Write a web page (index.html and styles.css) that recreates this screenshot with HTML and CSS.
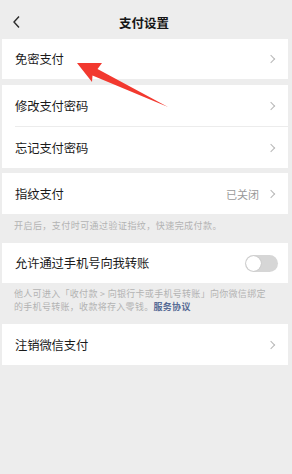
FILE: index.html
```html
<!DOCTYPE html>
<html lang="zh">
<head>
<meta charset="utf-8">
<link rel="stylesheet" href="styles.css">
</head>
<body>
<div class="page">
  <div class="nav">
    <svg class="back" width="10" height="14" viewBox="0 0 10 14"><path d="M7 1.5 L2 7 L7 12.5" fill="none" stroke="#2b2b2b" stroke-width="1.4"/></svg>
    <div class="title">支付设置</div>
  </div>

  <div class="card first">
    <div class="row"><span class="label">免密支付</span><span class="chev"></span></div>
  </div>

  <div class="card gap6">
    <div class="row"><span class="label">修改支付密码</span><span class="chev"></span></div>
    <div class="divider"></div>
    <div class="row"><span class="label">忘记支付密码</span><span class="chev"></span></div>
  </div>

  <div class="card gap5">
    <div class="row"><span class="label">指纹支付</span><span class="right"><span class="value">已关闭</span><span class="chev"></span></span></div>
  </div>
  <div class="desc d1">开启后，支付时可通过验证指纹，快速完成付款。</div>

  <div class="card">
    <div class="row r40"><span class="label">允许通过手机号向我转账</span><span class="toggle"><span class="knob"></span></span></div>
  </div>
  <div class="desc d2"><div>他人可进入「收付款 &gt; 向银行卡或手机号转账」向你微信绑定</div><div>的手机号转账，收款将存入零钱。<span class="link">服务协议</span></div></div>

  <div class="card">
    <div class="row"><span class="label">注销微信支付</span><span class="chev"></span></div>
  </div>

  <svg class="arrow" width="292" height="474" viewBox="0 0 292 474"><polygon points="77,63 102,63 97.5,69 168,107 92.5,75.5 92,82" fill="#f2392f"/></svg>
</div>
</body>
</html>
```

FILE: styles.css
```css
html, body {
  margin: 0;
  padding: 0;
  background: #ededed;
}
.page {
  position: relative;
  width: 292px;
  height: 474px;
  overflow: hidden;
  font-family: "Noto Sans CJK SC", "Noto Sans", sans-serif;
  color: #1a1a1a;
}
.nav {
  position: relative;
  height: 39px;
  width: 286px;
  margin-left: 2px;
  display: flex;
  align-items: center;
  justify-content: center;
}
.back {
  position: absolute;
  left: 10px;
  top: 15px;
}
.title {
  font-size: 12.5px;
  font-weight: 700;
  margin-top: 5px;
  margin-left: -2px;
  color: #151515;
}
.card {
  background: #fff;
  width: 286px;
  margin-left: 2px;
}
.gap6 { margin-top: 6px; }
.gap5 { margin-top: 5px; }
.row {
  height: 41px;
  display: flex;
  align-items: center;
  justify-content: space-between;
  padding: 0 12px 0 13px;
}
.first .row, .r40 { height: 40px; }
.label {
  font-size: 12.3px;
  letter-spacing: -0.1px;
}
.divider {
  height: 1px;
  background: #ececec;
  margin-left: 13px;
}
.right {
  display: flex;
  align-items: center;
}
.value {
  font-size: 11px;
  color: #9a9a9a;
  margin-right: 9px;
}
.chev {
  width: 5px;
  height: 5px;
  border-top: 1.2px solid #b8b8b8;
  border-right: 1.2px solid #b8b8b8;
  transform: rotate(45deg);
  margin-right: 2px;
}
.desc {
  font-size: 9px;
  color: #b3b3b3;
  line-height: 13px;
  padding-left: 14px;
  padding-right: 6px;
  white-space: nowrap;
}
.d1 {
  height: 29px;
  padding-top: 5px;
  box-sizing: border-box;
  letter-spacing: 0.45px;
}
.d2 {
  height: 41px;
  padding-top: 4px;
  box-sizing: border-box;
  letter-spacing: 0.3px;
}
.link {
  color: #576b95;
  font-weight: 700;
}
.toggle {
  position: relative;
  width: 33px;
  height: 17px;
  border-radius: 9px;
  background: #d6d6d6;
  margin-right: -2px;
}
.knob {
  position: absolute;
  left: 1px;
  top: 1px;
  width: 15px;
  height: 15px;
  border-radius: 50%;
  background: #fff;
  box-shadow: 0 0 1px rgba(0,0,0,0.3);
}
.arrow {
  position: absolute;
  left: 0;
  top: 0;
  pointer-events: none;
}
```
